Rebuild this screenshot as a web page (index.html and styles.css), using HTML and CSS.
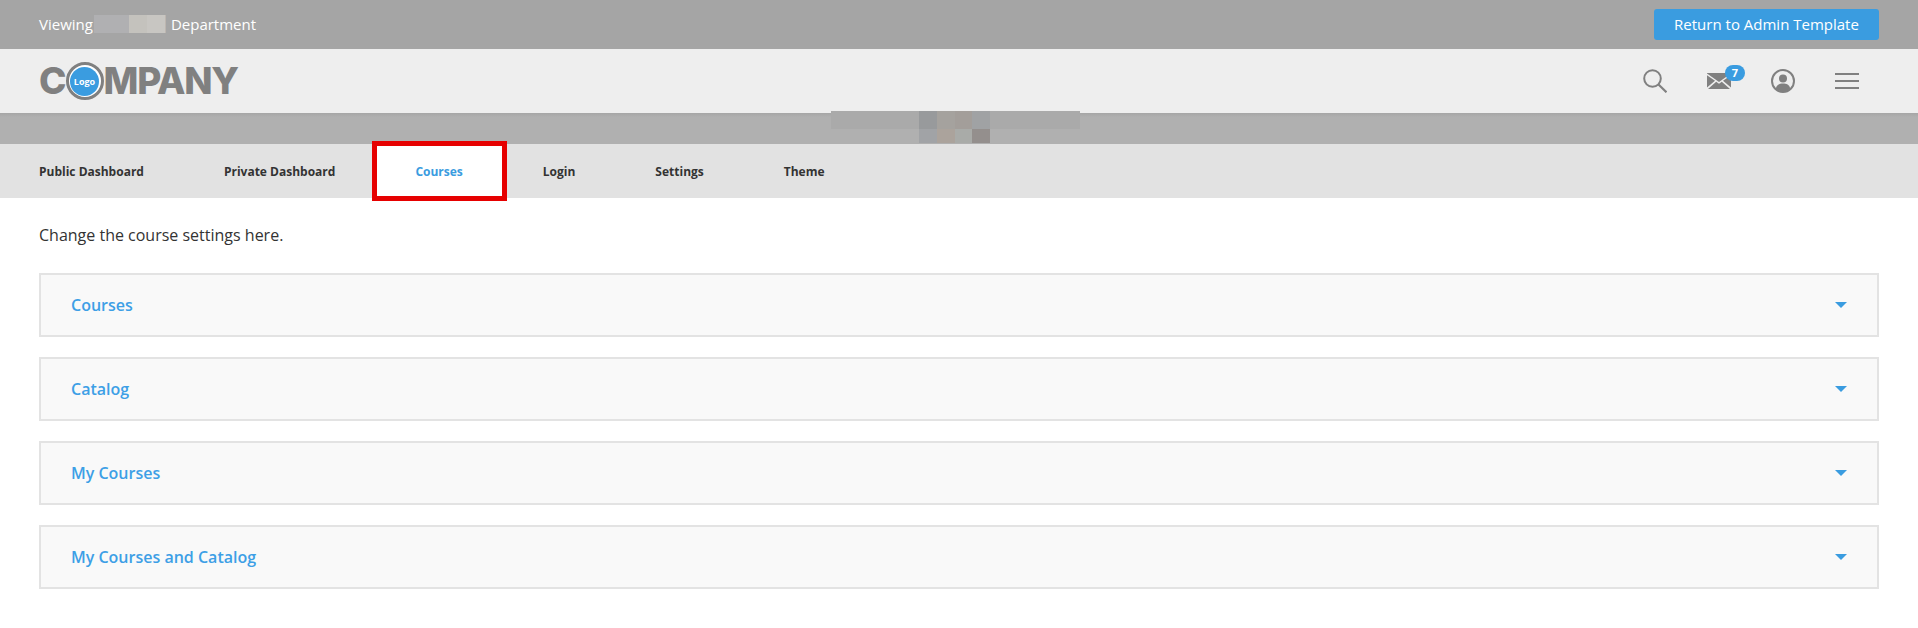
FILE: index.html
```html
<!DOCTYPE html>
<html lang="en">
<head>
<meta charset="utf-8">
<title>Course settings</title>
<link rel="stylesheet" href="styles.css">
</head>
<body>
<div class="topbar">
  <div class="viewing">
    <span>Viewing</span>
    <span class="mosaic-name"><i class="m1"></i><i class="m2"></i><i class="m3"></i><i class="m4"></i></span>
    <span>Department</span>
  </div>
  <a class="return-btn" href="#">Return to Admin Template</a>
</div>
<header class="header">
  <div class="logo">
    <span class="logo-letter">C</span>
    <span class="logo-ring"><span class="logo-disc">Logo</span></span>
    <span class="logo-rest">MPANY</span>
  </div>
  <div class="tools">
    <svg class="icon" viewBox="0 0 24 24" width="24" height="24" fill="none" stroke="#808080" stroke-width="2">
      <circle cx="9.5" cy="9.5" r="8.3"/><path d="M15.5 15.5 23.5 23.3" stroke-width="2.2"/>
    </svg>
    <span class="mail">
      <svg viewBox="0 0 24 16" width="24" height="16">
        <path d="M0 0.5 12 9 24 0.5V0H0Z" fill="#808080"/>
        <path d="M0 2.2V14.6L8 7.7ZM24 2.2V14.6L16 7.7ZM1 16 9.2 8.7 12 10.7 14.8 8.7 23 16Z" fill="#808080"/>
      </svg>
      <span class="badge">7</span>
    </span>
    <svg class="icon" viewBox="0 0 24 24" width="24" height="24">
      <circle cx="12" cy="12" r="11" fill="none" stroke="#808080" stroke-width="2"/>
      <circle cx="12" cy="9.6" r="4" fill="#808080"/>
      <path d="M4.8 19.5C5.6 15.8 8.4 14.6 12 14.6S18.4 15.8 19.2 19.5C17.4 21.6 14.8 22.6 12 22.6S6.6 21.6 4.8 19.5Z" fill="#808080"/>
    </svg>
    <span class="burger"><i></i><i></i><i></i></span>
  </div>
</header>
<div class="band">
  <div class="mosaic-title">
    <i class="t1"></i><i class="t2"></i><i class="t3"></i><i class="t4"></i><i class="t5"></i><i class="t6"></i>
    <i class="t0"></i><i class="t7"></i><i class="t8"></i><i class="t9"></i><i class="t10"></i><i class="t0"></i>
  </div>
</div>
<nav class="nav">
  <a href="#">Public Dashboard</a>
  <a href="#">Private Dashboard</a>
  <a href="#" class="active">Courses</a>
  <a href="#">Login</a>
  <a href="#">Settings</a>
  <a href="#">Theme</a>
</nav>
<main class="main">
  <p class="intro">Change the course settings here.</p>
  <section class="panel"><h2>Courses</h2><span class="caret"></span></section>
  <section class="panel"><h2>Catalog</h2><span class="caret"></span></section>
  <section class="panel"><h2>My Courses</h2><span class="caret"></span></section>
  <section class="panel"><h2>My Courses and Catalog</h2><span class="caret"></span></section>
</main>
</body>
</html>
```

FILE: styles.css
```css
* { box-sizing: border-box; }
html, body { margin: 0; padding: 0; }
body {
  font-family: "Open Sans", "Liberation Sans", sans-serif;
  background: #fff;
  color: #333;
  height: 628px;
  overflow: hidden;
}
a { text-decoration: none; }

.topbar {
  height: 49px;
  background: #a5a5a5;
  display: flex;
  align-items: center;
  justify-content: space-between;
  padding: 0 39px;
}
.viewing {
  display: flex;
  align-items: center;
  color: #fff;
  font-size: 15px;
  line-height: 18px;
  height: 18px;
  margin-top: -1px;
}
.mosaic-name { display: flex; height: 18px; margin: 0 5px 0 1px; }
.mosaic-name i { display: block; height: 18px; }
.m1 { width: 35px; background: #b0b0b2; }
.m2 { width: 18px; background: #c4c2bd; }
.m3 { width: 18px; background: #c8c6c2; }
.m4 { width: 1px; background: #bdb6b0; }
.return-btn {
  width: 225px;
  height: 31px;
  border-radius: 3px;
  background: #3a9ce0;
  color: #fff;
  font-size: 15px;
  line-height: 30px;
  text-align: center;
}

.header {
  height: 64px;
  background: #eee;
  display: flex;
  align-items: center;
  justify-content: space-between;
  padding: 0 59px 0 39px;
}
.logo {
  display: flex;
  align-items: center;
  color: #808080;
  font-family: Inter, "Liberation Sans", sans-serif;
  font-weight: 800;
  font-size: 37px;
  line-height: 38px;
}
.logo-rest { letter-spacing: -1.2px; }
.logo-ring {
  width: 38px;
  height: 38px;
  margin: 0 0 0 -1px;
  border-radius: 50%;
  border: 3px solid #808080;
  background: #fff;
  display: flex;
  align-items: center;
  justify-content: center;
}
.logo-disc {
  width: 29px;
  height: 29px;
  border-radius: 50%;
  background: #3a9ce0;
  color: #fff;
  font-family: "Open Sans", sans-serif;
  font-size: 9px;
  font-weight: 700;
  line-height: 29px;
  text-align: center;
}
.tools { display: flex; align-items: center; gap: 40px; }
.icon { display: block; }
.mail { position: relative; display: block; width: 24px; height: 16px; }
.mail svg { display: block; }
.badge {
  position: absolute;
  left: 18px;
  top: -8px;
  width: 20px;
  height: 16px;
  border-radius: 8px;
  background: #3a9ce0;
  color: #fff;
  font-size: 11px;
  font-weight: 700;
  line-height: 15px;
  text-align: center;
}
.burger { display: flex; flex-direction: column; justify-content: space-between; width: 24px; height: 16px; }
.burger i { display: block; height: 2px; background: #808080; }

.band {
  height: 31px;
  background: linear-gradient(#a6a6a6 0, #b0b0b0 4px);
  position: relative;
}
.mosaic-title {
  position: absolute;
  left: 831px;
  top: -2px;
  width: 249px;
  height: 32px;
  display: grid;
  grid-template-columns: 88px 18px 18px 17px 18px 90px;
  grid-template-rows: 18px 14px;
}
.mosaic-title i { display: block; }
.t1 { background: #aaa; }
.t2 { background: #989a9c; }
.t3 { background: #a5a29e; }
.t4 { background: #a39e9a; }
.t5 { background: #a0a2a4; }
.t6 { background: #aaa; }
.t7 { background: #a1a3a6; }
.t8 { background: #aba39c; }
.t9 { background: #a9aba8; }
.t10 { background: #948f8d; }

.nav {
  height: 54px;
  background: #e2e2e2;
  display: flex;
}
.nav a {
  position: relative;
  padding: 0 40px;
  color: #333;
  font-size: 12px;
  font-weight: 700;
  line-height: 56px;
}
.nav a:first-child { padding-left: 39px; }
.nav a.active { color: #3a9ce0; background: #fff; }
.nav a.active::after {
  content: "";
  position: absolute;
  left: -3px;
  right: -4px;
  top: -3px;
  bottom: -3px;
  border: 5px solid #e60000;
}

.main { padding: 0 39px; }
.intro { margin: 0; padding-top: 26px; font-size: 16px; line-height: 22px; height: 75px; color: #333; }
.panel {
  height: 64px;
  margin-bottom: 20px;
  border: 2px solid #e3e3e3;
  background: #f9f9f9;
  padding: 0 30px;
  display: flex;
  align-items: center;
  justify-content: space-between;
}
.panel h2 { margin: 0; font-size: 16px; font-weight: 600; color: #3d9fe6; }
.caret {
  width: 0;
  height: 0;
  border-left: 6px solid transparent;
  border-right: 6px solid transparent;
  border-top: 6px solid #3a9ce0;
}
```
